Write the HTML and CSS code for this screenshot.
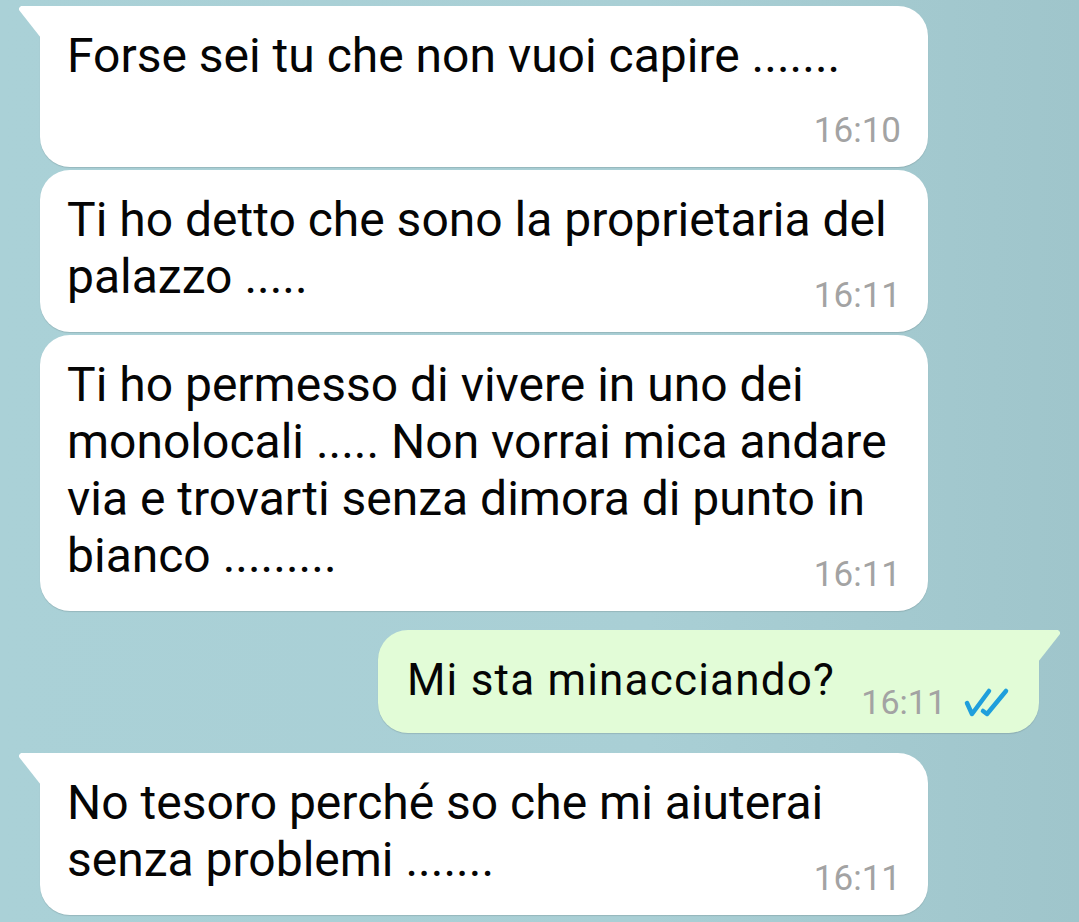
FILE: index.html
```html
<!DOCTYPE html>
<html lang="it">
<head>
    <meta charset="UTF-8">
    <meta name="viewport" content="width=device-width, initial-scale=1.0">
    <title>Chat</title>
    <link rel="stylesheet" href="styles.css">
</head>
<body>
    <div class="chat">
        <div class="msg in first">
            <span class="text">Forse sei tu che non vuoi capire .......</span>
            <span class="time own-line">16:10</span>
        </div>

        <div class="msg in">
            <span class="text">Ti ho detto che sono la proprietaria del palazzo .....</span>
            <span class="time">16:11</span>
        </div>

        <div class="msg in">
            <span class="text">Ti ho permesso di vivere in uno dei monolocali ..... Non vorrai mica andare via e trovarti senza dimora di punto in bianco .........</span>
            <span class="time">16:11</span>
        </div>

        <div class="msg out first">
            <span class="text">Mi sta minacciando?</span>
            <div class="meta">
                <span class="time">16:11</span>
                <svg class="ticks" width="56" height="32" viewBox="0 0 56 32">
                    <path d="M11 17 L16 28 L33 5" />
                    <path d="M27 25 L31 28 L50 5" />
                </svg>
            </div>
        </div>

        <div class="msg in first">
            <span class="text">No tesoro perché so che mi aiuterai senza problemi .......</span>
            <span class="time">16:11</span>
        </div>
    </div>
</body>
</html>
```

FILE: styles.css
```css
body {
    margin: 0;
    padding: 0;
    font-family: Roboto, "Noto Sans", Arial, sans-serif;
    background: linear-gradient(90deg, #aad1d7 0%, #a9cfd5 60%, #9fc5cb 100%);
    height: 922px;
    overflow: hidden;
}

.chat {
    display: flex;
    flex-direction: column;
    padding: 6px 40px 0 40px;
}

.msg {
    position: relative;
    box-sizing: border-box;
    border-radius: 30px;
    box-shadow: 0 1px 1px rgba(0, 0, 0, 0.12);
    font-size: 48px;
    line-height: 57px;
    color: #050505;
}

.msg.in {
    width: 888px;
    background: #fff;
    padding: 21px 27px 16px 27px;
    margin-bottom: 3px;
    align-self: flex-start;
}

.msg.in.first {
    border-top-left-radius: 0;
}

.msg.in.first::before {
    content: "";
    position: absolute;
    top: 0;
    left: -21px;
    width: 22px;
    height: 32px;
    background: #fff;
    clip-path: polygon(2px 0, 22px 0, 22px 32px, 0 4px, 0 2px);
}

.msg.out {
    align-self: flex-end;
    width: 661px;
    margin: 16px 0 20px 0;
    background: #e2fcd7;
    padding: 22px 27px 0 29px;
    height: 103px;
    display: flex;
    align-items: flex-start;
    justify-content: space-between;
    font-size: 44px;
    line-height: 56px;
}

.msg.out.first {
    border-top-right-radius: 0;
}

.msg.out.first::before {
    content: "";
    position: absolute;
    top: 0;
    right: -21px;
    width: 22px;
    height: 32px;
    background: #e2fcd7;
    clip-path: polygon(0 0, 20px 0, 22px 2px, 22px 4px, 0 32px);
}

.msg.out .text {
    letter-spacing: 1.2px;
}

.time {
    display: block;
    text-align: right;
    font-size: 35px;
    line-height: 40px;
    color: #a3a3a3;
    margin-top: -29px;
}

.time.own-line {
    margin-top: 27px;
}

.meta {
    display: flex;
    align-items: center;
    gap: 10px;
    margin-top: 30px;
}

.meta .time {
    margin-top: 0;
    font-size: 34px;
}

.ticks path {
    fill: none;
    stroke: #1f9fdc;
    stroke-width: 4.5;
    stroke-linecap: round;
    stroke-linejoin: round;
}
```
